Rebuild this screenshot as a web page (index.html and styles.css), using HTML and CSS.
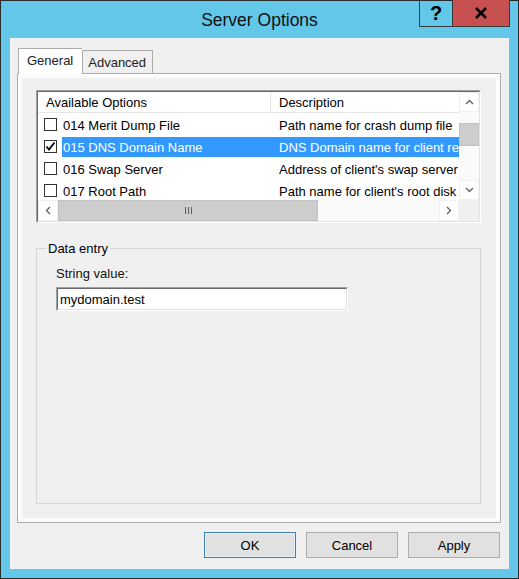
FILE: index.html
```html
<!DOCTYPE html>
<html lang="en">
    <head>
        <meta charset="UTF-8">
        <title>Server Options</title>
        <link rel="stylesheet" href="styles.css">
    </head>
    <body>
        <div class="window">
            <div class="titlebar">
                <span class="title">Server Options</span>
                <div class="caption">
                    <span class="cap-btn help">?</span>
                    <span class="cap-btn close">
                        <svg width="14" height="12" viewBox="0 0 14 12">
                            <path d="M2 1 L12 11 M12 1 L2 11" stroke="#000" stroke-width="2.6" fill="none"/>
                        </svg>
                    </span>
                </div>
            </div>

            <div class="client">
                <div class="tabs">
                    <div class="tab active">General</div>
                    <div class="tab">Advanced</div>
                </div>

                <div class="tab-panel">
                    <div class="tab-page">
                        <div class="listview">
                            <div class="lv-inner">
                                <div class="lv-main">
                                    <div class="lv-body">
                                        <div class="lv-header">
                                            <div class="col-name">Available Options</div>
                                            <div class="col-desc">Description</div>
                                        </div>
                                        <div class="lv-rows">
                                            <div class="row">
                                                <span class="check"></span>
                                                <div class="item">
                                                    <span class="name">014 Merit Dump File</span>
                                                    <span class="desc">Path name for crash dump file</span>
                                                </div>
                                            </div>
                                            <div class="row">
                                                <span class="check">
                                                    <svg width="11" height="11" viewBox="0 0 11 11">
                                                        <path d="M1.5 5.5 L4 8.5 L9.5 1.5" stroke="#000" stroke-width="1.8" fill="none"/>
                                                    </svg>
                                                </span>
                                                <div class="item selected">
                                                    <span class="name">015 DNS Domain Name</span>
                                                    <span class="desc">DNS Domain name for client resolutions</span>
                                                </div>
                                            </div>
                                            <div class="row">
                                                <span class="check"></span>
                                                <div class="item">
                                                    <span class="name">016 Swap Server</span>
                                                    <span class="desc">Address of client's swap server</span>
                                                </div>
                                            </div>
                                            <div class="row">
                                                <span class="check"></span>
                                                <div class="item">
                                                    <span class="name">017 Root Path</span>
                                                    <span class="desc">Path name for client's root disk</span>
                                                </div>
                                            </div>
                                        </div>
                                    </div>
                                    <div class="vscroll">
                                        <div class="sb-btn">
                                            <svg width="9" height="6" viewBox="0 0 9 6"><path d="M1 5 L4.5 1.5 L8 5" stroke="#606060" stroke-width="1.3" fill="none"/></svg>
                                        </div>
                                        <div class="sb-track v-top"></div>
                                        <div class="sb-thumb v-thumb"></div>
                                        <div class="sb-track v-rest"></div>
                                        <div class="sb-btn">
                                            <svg width="9" height="6" viewBox="0 0 9 6"><path d="M1 1 L4.5 4.5 L8 1" stroke="#606060" stroke-width="1.3" fill="none"/></svg>
                                        </div>
                                    </div>
                                </div>
                                <div class="hscroll">
                                    <div class="sb-btn">
                                        <svg width="6" height="9" viewBox="0 0 6 9"><path d="M5 1 L1.5 4.5 L5 8" stroke="#606060" stroke-width="1.3" fill="none"/></svg>
                                    </div>
                                    <div class="sb-thumb h-thumb">
                                        <svg width="9" height="7" viewBox="0 0 9 7"><path d="M1.5 0 V7 M4.5 0 V7 M7.5 0 V7" stroke="#606060" stroke-width="1" fill="none"/></svg>
                                    </div>
                                    <div class="sb-track h-rest"></div>
                                    <div class="sb-btn">
                                        <svg width="6" height="9" viewBox="0 0 6 9"><path d="M1 1 L4.5 4.5 L1 8" stroke="#606060" stroke-width="1.3" fill="none"/></svg>
                                    </div>
                                    <div class="sb-corner"></div>
                                </div>
                            </div>
                        </div>

                        <fieldset class="groupbox">
                            <legend>Data entry</legend>
                            <div class="field">
                                <label class="field-label">String value:</label>
                                <div class="textbox"><span>mydomain.test</span></div>
                            </div>
                        </fieldset>
                    </div>
                </div>

                <div class="buttons">
                    <button type="button" class="btn default">OK</button>
                    <button type="button" class="btn">Cancel</button>
                    <button type="button" class="btn">Apply</button>
                </div>
            </div>
        </div>
    </body>
</html>
```

FILE: styles.css
```css
/* Global */
* {
    box-sizing: border-box;
}

body {
    margin: 0;
    font-family: "Liberation Sans", Arial, sans-serif;
    font-size: 13px;
    color: #000;
    background: #fff;
}

/* Window frame */
.window {
    width: 519px;
    height: 579px;
    border: 1px solid #2b2b2b;
    background: #63c7e9;
    display: flex;
    flex-direction: column;
}

.titlebar {
    position: relative;
    height: 37px;
    display: flex;
    align-items: center;
    justify-content: center;
    padding-top: 2px;
}

.title {
    font-size: 17.5px;
    color: #111;
}

.caption {
    position: absolute;
    top: -1px;
    right: 8px;
    display: flex;
    border: 1px solid #3a3a3a;
    border-top: none;
}

.cap-btn {
    height: 26px;
    display: flex;
    align-items: center;
    justify-content: center;
}

.help {
    width: 33px;
    border-right: 1px solid #3a3a3a;
    font-weight: bold;
    font-size: 20px;
    padding-top: 1px;
}

.close {
    width: 56px;
    background: #c75050;
}

/* Client area */
.client {
    flex: 1;
    margin: 0 9px 9px;
    background: #f0f0f0;
    padding: 10px 8px 11px 7px;
    display: flex;
    flex-direction: column;
}

/* Tabs */
.tabs {
    height: 25px;
    display: flex;
    align-items: flex-end;
    padding-left: 1px;
}

.tab {
    height: 23px;
    padding: 4px 6px 0 5px;
    border: 1px solid #acacac;
    border-bottom: none;
    background: #f0f0f0;
    color: #222;
}

.tab.active {
    position: relative;
    z-index: 1;
    height: 26px;
    margin-bottom: -1px;
    padding: 4px 9px 0 8px;
    background: #fff;
    border-right: none;
}

.tab-panel {
    height: 450px;
    border: 1px solid #acacac;
    background: #fbfbfb;
    padding: 4px;
}

.tab-page {
    height: 100%;
    background: #f0f0f0;
    padding: 12px 15px 14px 14px;
    display: flex;
    flex-direction: column;
}

/* List view */
.listview {
    height: 133px;
    border: 1px solid;
    border-color: #a0a0a0 #fff #fff #a0a0a0;
}

.lv-inner {
    height: 100%;
    border: 1px solid;
    border-color: #696969 #e3e3e3 #e3e3e3 #696969;
    background: #fff;
    display: flex;
    flex-direction: column;
}

.lv-main {
    flex: 1;
    display: flex;
    overflow: hidden;
}

.lv-body {
    flex: 1;
    overflow: hidden;
}

.lv-header {
    height: 21px;
    display: flex;
    align-items: center;
    border-bottom: 1px solid #e5e5e5;
    white-space: nowrap;
}

.col-name {
    width: 233px;
    height: 100%;
    padding: 3px 0 0 8px;
    border-right: 1px solid #e5e5e5;
}

.col-desc {
    padding: 0 0 0 8px;
}

.lv-rows {
    padding-top: 1px;
}

.row {
    height: 22px;
    display: flex;
    align-items: center;
    white-space: nowrap;
}

.check {
    width: 13px;
    height: 13px;
    margin: 0 5px 1px 6px;
    border: 1px solid #333;
    background: #fff;
    display: flex;
    align-items: center;
    justify-content: center;
    flex-shrink: 0;
}

.item {
    flex: 1;
    height: 20px;
    display: flex;
    align-items: center;
    overflow: hidden;
}

.item.selected {
    background: #3399ff;
    color: #fff;
}

.name {
    width: 209px;
    padding-left: 1px;
    flex-shrink: 0;
}

.desc {
    padding-left: 8px;
}

/* Scrollbars */
.vscroll {
    width: 20px;
    display: flex;
    flex-direction: column;
    background: #fafafa;
}

.sb-btn {
    width: 20px;
    height: 20px;
    display: flex;
    align-items: center;
    justify-content: center;
    background: #fff;
    border: 1px solid #f0f0f0;
    flex-shrink: 0;
}

.sb-track {
    background: #fafafa;
}

.v-top {
    height: 11px;
}

.v-thumb {
    height: 23px;
}

.v-rest {
    flex: 1;
}

.sb-thumb {
    background: #cdcdcd;
    border: 1px solid #c2c2c2;
}

.hscroll {
    height: 21px;
    display: flex;
    background: #fafafa;
}

.hscroll .sb-btn {
    height: 21px;
}

.h-thumb {
    width: 260px;
    display: flex;
    align-items: center;
    justify-content: center;
}

.h-rest {
    flex: 1;
}

.sb-corner {
    width: 20px;
    background: #f0f0f0;
}

/* Group box */
.groupbox {
    flex: 1;
    margin: 18px 0 0;
    padding: 0;
    min-width: 0;
    border: 1px solid #d5d5d5;
}

.groupbox legend {
    margin-left: 9px;
    padding: 0 2px;
    line-height: 15px;
}

.field {
    padding: 10px 0 0 19px;
    display: flex;
    flex-direction: column;
    align-items: flex-start;
}

.field-label {
    line-height: 15px;
    color: #111;
}

.textbox {
    width: 292px;
    height: 24px;
    margin-top: 6px;
    border: 1px solid;
    border-color: #a0a0a0 #fff #fff #a0a0a0;
    background: #fff;
}

.textbox span {
    display: block;
    height: 100%;
    padding: 3px 0 0 2px;
    border: 1px solid;
    border-color: #696969 #e3e3e3 #e3e3e3 #696969;
}

/* Dialog buttons */
.buttons {
    margin-top: 9px;
    display: flex;
    justify-content: flex-end;
    gap: 10px;
    padding-right: 1px;
}

.btn {
    width: 92px;
    height: 26px;
    font-family: "Liberation Sans", Arial, sans-serif;
    font-size: 13px;
    color: #000;
    background: #e1e1e1;
    border: 1px solid #adadad;
    padding: 0;
}

.btn.default {
    border-color: #3c7fb1;
    box-shadow: inset 0 0 0 1px #e5f1fb;
}
```
